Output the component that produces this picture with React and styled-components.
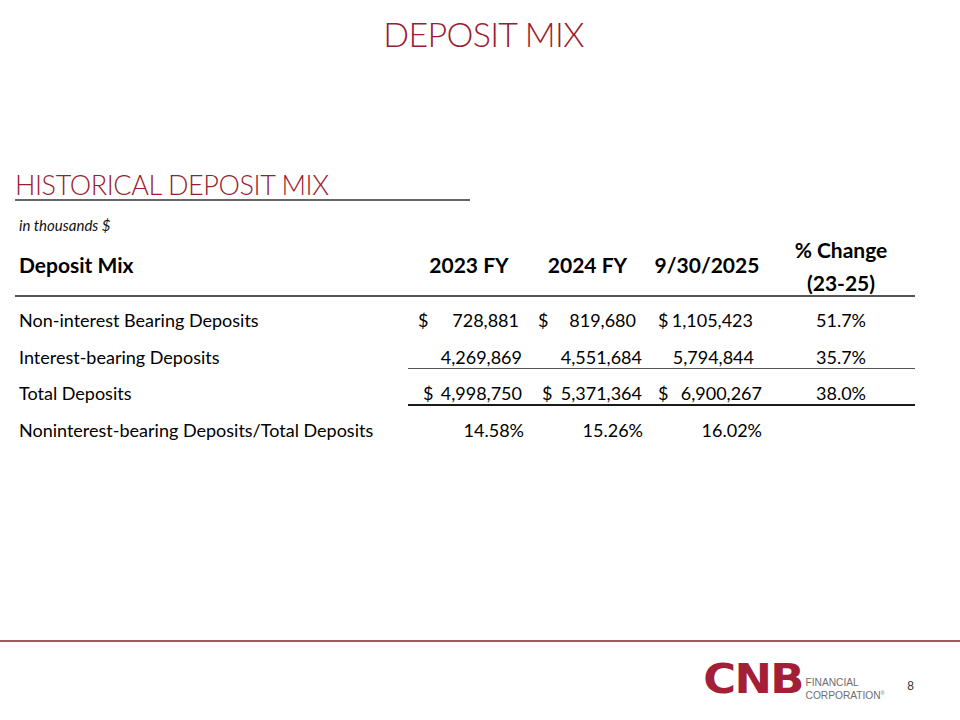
import React from "react";
import styled, { createGlobalStyle } from "styled-components";

const GlobalStyle = createGlobalStyle`
  html, body {
    margin: 0;
    padding: 0;
    background: #ffffff;
  }
  * {
    box-sizing: border-box;
  }
`;

const Slide = styled.div`
  width: 960px;
  height: 720px;
  display: flex;
  flex-direction: column;
  background: #ffffff;
  color: #000000;
  font-family: Lato, "Open Sans", sans-serif;
  overflow: hidden;
`;

const Title = styled.h1`
  margin: 14px 0 0;
  padding-left: 7px;
  text-align: center;
  font-size: 34px;
  font-weight: 300;
  letter-spacing: -0.7px;
  line-height: 40px;
  color: #9b1b30;
`;

const SectionTitle = styled.h2`
  margin: 117px 0 0 15px;
  width: 455px;
  font-size: 27px;
  font-weight: 300;
  letter-spacing: -0.4px;
  line-height: 28px;
  color: #9b1b30;
  border-bottom: 2px solid #666666;
`;

const Note = styled.p`
  margin: 15px 0 0 19px;
  font-size: 15px;
  font-style: italic;
  font-weight: 400;
  line-height: 18px;
  color: #111111;
`;

const Table = styled.div`
  margin: 5px 0 0 15px;
  width: 900px;
`;

const Row = styled.div`
  display: grid;
  grid-template-columns: 393px 117px 120px 120px 150px;
  height: ${(p) => (p.$h ? `${p.$h}px` : "auto")};
`;

const HeadCell = styled.div`
  display: flex;
  flex-direction: column;
  justify-content: flex-end;
  align-items: ${(p) => (p.$left ? "flex-start" : "center")};
  gap: 11px;
  padding: 0 0 ${(p) => p.$pb}px ${(p) => p.$pl}px;
  border-bottom: 2px solid #555555;
  font-size: 21px;
  font-weight: 700;
  line-height: 22px;
`;

const Cell = styled.div`
  display: flex;
  align-items: flex-end;
  justify-content: ${(p) => p.$justify || "flex-start"};
  padding: 0 ${(p) => p.$pr || 0}px ${(p) => p.$pb || 0}px ${(p) => p.$pl || 0}px;
  border-bottom: ${(p) =>
    p.$rule ? `${p.$rule}px solid ${p.$rule > 1 ? "#1a1a1a" : "#555555"}` : "none"};
  font-size: 18px;
  line-height: 22px;
  white-space: nowrap;
  font-variant-numeric: tabular-nums;
`;

const Footer = styled.footer`
  margin-top: auto;
  height: 80px;
  border-top: 2px solid #a3575f;
  display: flex;
  justify-content: flex-end;
  align-items: flex-start;
  gap: 23px;
  padding: 22px 46px 0 0;
`;

const Logo = styled.div`
  display: flex;
  align-items: flex-start;
`;

const LogoMark = styled.span`
  display: inline-block;
  font-family: "DejaVu Sans", sans-serif;
  font-weight: 700;
  font-size: 40px;
  line-height: 30px;
  letter-spacing: -1.5px;
  color: #a31f37;
  transform: scaleX(1.12);
  transform-origin: right center;
`;

const LogoText = styled.div`
  margin: 13px 0 0 3px;
  font-family: "Liberation Sans", Arial, sans-serif;
  font-size: 10.2px;
  line-height: 11px;
  color: #6d6e71;

  sup {
    font-size: 5px;
    vertical-align: 4px;
  }
`;

const PageNumber = styled.span`
  margin-top: 15px;
  font-family: "Liberation Sans", Arial, sans-serif;
  font-size: 12px;
  line-height: 14px;
  color: #333333;
`;

const headers = [
  { label: ["Deposit Mix"], left: true, pl: 4, pb: 19 },
  { label: ["2023 FY"], pl: 5, pb: 19 },
  { label: ["2024 FY"], pl: 5, pb: 19 },
  { label: ["9/30/2025"], pl: 4, pb: 19 },
  { label: ["% Change", "(23-25)"], pl: 2, pb: 1 },
];

const rows = [
  {
    label: "Non-interest Bearing Deposits",
    h: 36,
    pb: 2,
    rule: 0,
    cells: [
      { d: "$", v: "728,881", pl: 10, pr: 6 },
      { d: "$", v: "819,680", pl: 13, pr: 9 },
      { d: "$", v: "1,105,423", pl: 13, pr: 12 },
    ],
    pct: "51.7%",
  },
  {
    label: "Interest-bearing Deposits",
    h: 36,
    pb: 0,
    rule: 1,
    cells: [
      { v: "4,269,869", pr: 3 },
      { v: "4,551,684", pr: 3 },
      { v: "5,794,844", pr: 11 },
    ],
    pct: "35.7%",
  },
  {
    label: "Total Deposits",
    h: 37,
    pb: 0,
    rule: 2,
    cells: [
      { d: "$", v: "4,998,750", pl: 15, pr: 3 },
      { d: "$", v: "5,371,364", pl: 17, pr: 3 },
      { d: "$", v: "6,900,267", pl: 13, pr: 3 },
    ],
    pct: "38.0%",
  },
  {
    label: "Noninterest-bearing Deposits/Total Deposits",
    h: 37,
    pb: 2,
    rule: 0,
    cells: [
      { v: "14.58%", pr: 1 },
      { v: "15.26%", pr: 2 },
      { v: "16.02%", pr: 3 },
    ],
    pct: "",
  },
];

function DepositTable() {
  return (
    <Table>
      <Row>
        {headers.map((h) => (
          <HeadCell key={h.label[0]} $left={h.left} $pl={h.pl} $pb={h.pb}>
            {h.label.map((line) => (
              <span key={line}>{line}</span>
            ))}
          </HeadCell>
        ))}
      </Row>
      {rows.map((r) => (
        <Row key={r.label} $h={r.h}>
          <Cell $pl={4} $pb={r.pb + r.rule}>
            {r.label}
          </Cell>
          {r.cells.map((c, i) => (
            <Cell
              key={i}
              $justify={c.d ? "space-between" : "flex-end"}
              $pl={c.pl}
              $pr={c.pr}
              $pb={r.pb}
              $rule={r.rule}
            >
              {c.d && <span>{c.d}</span>}
              <span>{c.v}</span>
            </Cell>
          ))}
          <Cell $justify="center" $pl={2} $pb={r.pb} $rule={r.rule}>
            {r.pct}
          </Cell>
        </Row>
      ))}
    </Table>
  );
}

export default function App() {
  return (
    <>
      <GlobalStyle />
      <Slide>
        <Title>DEPOSIT MIX</Title>
        <SectionTitle>HISTORICAL DEPOSIT MIX</SectionTitle>
        <Note>in thousands $</Note>
        <DepositTable />
        <Footer>
          <Logo>
            <LogoMark>CNB</LogoMark>
            <LogoText>
              FINANCIAL
              <br />
              CORPORATION<sup>®</sup>
            </LogoText>
          </Logo>
          <PageNumber>8</PageNumber>
        </Footer>
      </Slide>
    </>
  );
}
